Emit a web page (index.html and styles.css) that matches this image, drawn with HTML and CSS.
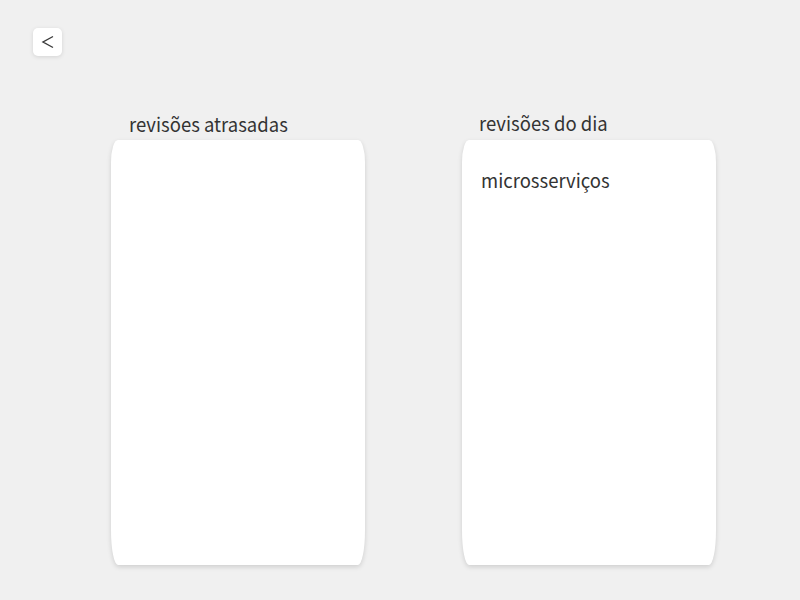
FILE: index.html
```html
<!DOCTYPE html>
<html lang="pt">
<head>
<meta charset="utf-8">
<link rel="stylesheet" href="styles.css">
</head>
<body>
<div class="page">
  <header class="top">
    <button class="back" aria-label="voltar">
      <svg width="14" height="14" viewBox="0 0 14 14"><polyline points="12,1.5 2,7 12,12.5" fill="none" stroke="#3a3a3a" stroke-width="1.4"/></svg>
    </button>
  </header>
  <main class="board">
    <section class="column">
      <h2 class="column-title">revisões atrasadas</h2>
      <div class="card"></div>
    </section>
    <section class="column">
      <h2 class="column-title column-title-b">revisões do dia</h2>
      <div class="card">
        <div class="item">microsserviços</div>
      </div>
    </section>
  </main>
</div>
</body>
</html>
```
FILE: styles.css
```css
html, body {
  margin: 0;
  padding: 0;
  background: #f0f0f0;
  font-family: "Noto Sans CJK KR", "Noto Sans", sans-serif;
  color: #333333;
}
.page {
  width: 800px;
  height: 600px;
  box-sizing: border-box;
  padding-top: 28px;
}
.top {
  padding-left: 33px;
  height: 28px;
}
.back {
  width: 29px;
  height: 28px;
  border: none;
  background: #ffffff;
  border-radius: 5px;
  box-shadow: 0 1px 4px rgba(0, 0, 0, 0.12);
  padding: 0;
  display: flex;
  align-items: center;
  justify-content: center;
}
.back svg {
  display: block;
}
.board {
  display: flex;
  gap: 97px;
  padding-left: 111px;
  padding-top: 55px;
}
.column {
  width: 254px;
  display: flex;
  flex-direction: column;
}
.column-title {
  margin: 0;
  font-weight: normal;
  font-size: 18.5px;
  line-height: 26px;
  padding-left: 18px;
  height: 29px;
  transform: scaleY(1.05);
}
.column-title-b {
  padding-left: 17px;
  margin-top: -1px;
  height: 30px;
}
.card {
  height: 425px;
  background: #ffffff;
  border-radius: 7px 7px 7px 7px / 22px 22px 35px 35px;
  box-shadow: 0 2px 5px rgba(0, 0, 0, 0.14);
  box-sizing: border-box;
  padding: 28px 19px 0;
}
.item {
  font-size: 18.5px;
  line-height: 24px;
  transform: scaleY(1.05);
  transform-origin: left center;
}
```
